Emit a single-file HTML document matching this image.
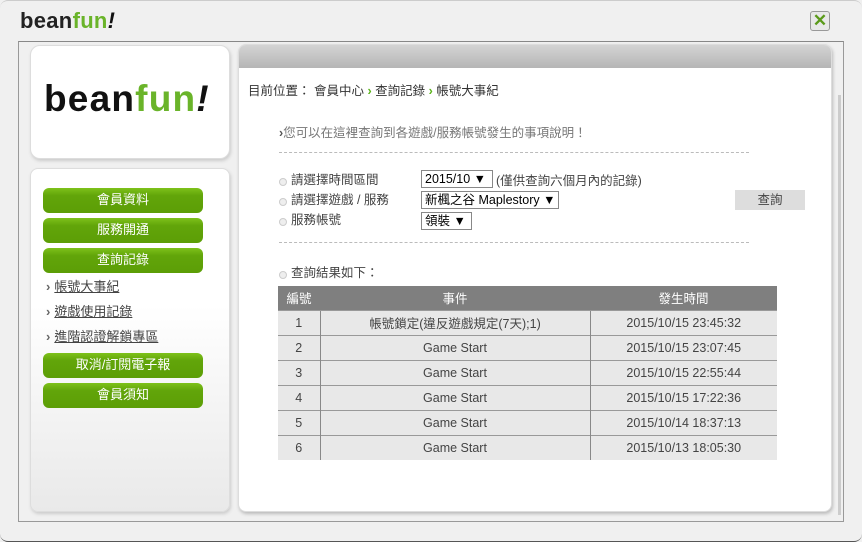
<!DOCTYPE html>
<html><head><meta charset="utf-8"><style>
*{margin:0;padding:0;box-sizing:border-box}
body{width:862px;height:542px;background:#f0f0f0;font-family:"Liberation Sans","Noto Sans CJK TC",sans-serif;font-size:12px;color:#333;position:relative;overflow:hidden}
.a{position:absolute}
.logo b{font-weight:bold}
.btn{position:absolute;left:43px;width:160px;height:25px;border-radius:6px;background:linear-gradient(#7ec21a,#62a50a 30%,#5c9e06);color:#fff;text-align:center;line-height:24px;font-size:13px}
.sub{position:absolute;left:46px;font-size:13px;color:#444}
.sub u{margin-left:4px}
.sub span{color:#666;font-weight:bold}
.lbl{position:absolute;left:279px;font-size:12.5px;color:#444}
.lbl i{display:inline-block;width:8px;height:8px;border:1px solid #ccc;border-radius:50%;margin-right:4px;vertical-align:-2px;background:#eee}
.sel{position:absolute;height:18px;border:1px solid #888;background:#fff;font-size:12.5px;line-height:16px;padding-left:3px;color:#000}
table{position:absolute;left:278px;top:286px;width:499px;border-collapse:collapse;font-size:12.5px;color:#444;text-align:center}
th{background:#7f7f7f;color:#fff;font-weight:normal;height:24px}
td{background:#e8e8e8;height:25px;border-top:1px solid #999}
td+td{border-left:1px solid #888}
.dash{position:absolute;left:279px;width:470px;border-top:1px dashed #bbb}
</style></head><body>
<div class="a" style="left:0;top:0;width:862px;height:542px;border-radius:8px;background:#f0f0f0;border-top:1px solid #ccc;border-bottom:1px solid #555"></div>
<div class="a logo" style="left:20px;top:8px;font-size:22px;letter-spacing:0.3px;color:#222;font-weight:bold">bean<span style="color:#6ab42a">fun</span><i style="color:#111">!</i></div>
<div class="a" style="left:810px;top:11px;width:20px;height:20px;border:1px solid #999;border-radius:3px;background:#e8e8e8;color:#5a9a1a;font-weight:bold;font-size:17px;line-height:18px;text-align:center">✕</div>
<div class="a" style="left:18px;top:41px;width:826px;height:481px;border:1px solid #999;border-top-color:#888;background:#f0f0f0"></div>
<div class="a" style="left:30px;top:45px;width:200px;height:114px;background:#fff;border:1px solid #ddd;border-radius:10px;box-shadow:1px 2px 3px #ccc"></div>
<div class="a logo" style="left:44px;top:78px;font-size:37px;font-weight:bold;color:#111;letter-spacing:1.2px">bean<span style="color:#6ab42a">fun</span><i>!</i></div>
<div class="a" style="left:30px;top:168px;width:200px;height:344px;background:linear-gradient(#fff,#fff 40%,#e9e9e9);border:1px solid #ddd;border-radius:8px;box-shadow:1px 2px 3px #ccc"></div>
<div class="btn" style="top:188px">會員資料</div>
<div class="btn" style="top:218px">服務開通</div>
<div class="btn" style="top:248px">查詢記錄</div>
<div class="sub" style="top:276px"><span>›</span><u>帳號大事紀</u></div>
<div class="sub" style="top:301px"><span>›</span><u>遊戲使用記錄</u></div>
<div class="sub" style="top:326px"><span>›</span><u>進階認證解鎖專區</u></div>
<div class="btn" style="top:353px">取消/訂閱電子報</div>
<div class="btn" style="top:383px">會員須知</div>
<div class="a" style="left:238px;top:44px;width:594px;height:468px;background:#fff;border:1px solid #ddd;border-radius:8px;box-shadow:1px 2px 3px #bbb;overflow:hidden"><div style="height:23px;background:linear-gradient(#d4d4d4,#b5b5b5)"></div></div>
<div class="a" style="left:838px;top:95px;width:3px;height:420px;background:#ccc"></div>
<div class="a" style="left:248px;top:80px;font-size:12.5px;color:#333">目前位置： 會員中心 <b style="color:#5ab31a">›</b> 查詢記錄 <b style="color:#5ab31a">›</b> 帳號大事紀</div>
<div class="a" style="left:279px;top:122px;font-size:12.5px;color:#777"><b style="color:#555">›</b>您可以在這裡查詢到各遊戲/服務帳號發生的事項說明！</div>
<div class="dash" style="top:152px"></div>
<div class="lbl" style="top:169px"><i></i>請選擇時間區間</div>
<div class="lbl" style="top:189px"><i></i>請選擇遊戲 / 服務</div>
<div class="lbl" style="top:209px"><i></i>服務帳號</div>
<div class="sel" style="left:421px;top:170px;width:72px">2015/10 ▼</div>
<div class="a" style="left:496px;top:170px;font-size:12.5px;color:#444">(僅供查詢六個月內的記錄)</div>
<div class="sel" style="left:421px;top:191px;width:138px">新楓之谷 Maplestory ▼</div>
<div class="sel" style="left:421px;top:212px;width:51px">領裝 ▼</div>
<div class="a" style="left:735px;top:190px;width:70px;height:20px;background:#ddd;text-align:center;line-height:20px;font-size:12.5px;color:#444">查詢</div>
<div class="dash" style="top:242px"></div>
<div class="lbl" style="top:262px"><i></i>查詢結果如下：</div>
<table>
<tr><th style="width:42px">編號</th><th style="width:270px">事件</th><th>發生時間</th></tr>
<tr><td>1</td><td>帳號鎖定(違反遊戲規定(7天);1)</td><td>2015/10/15 23:45:32</td></tr>
<tr><td>2</td><td>Game Start</td><td>2015/10/15 23:07:45</td></tr>
<tr><td>3</td><td>Game Start</td><td>2015/10/15 22:55:44</td></tr>
<tr><td>4</td><td>Game Start</td><td>2015/10/15 17:22:36</td></tr>
<tr><td>5</td><td>Game Start</td><td>2015/10/14 18:37:13</td></tr>
<tr><td>6</td><td>Game Start</td><td>2015/10/13 18:05:30</td></tr>
</table>
</body></html>
